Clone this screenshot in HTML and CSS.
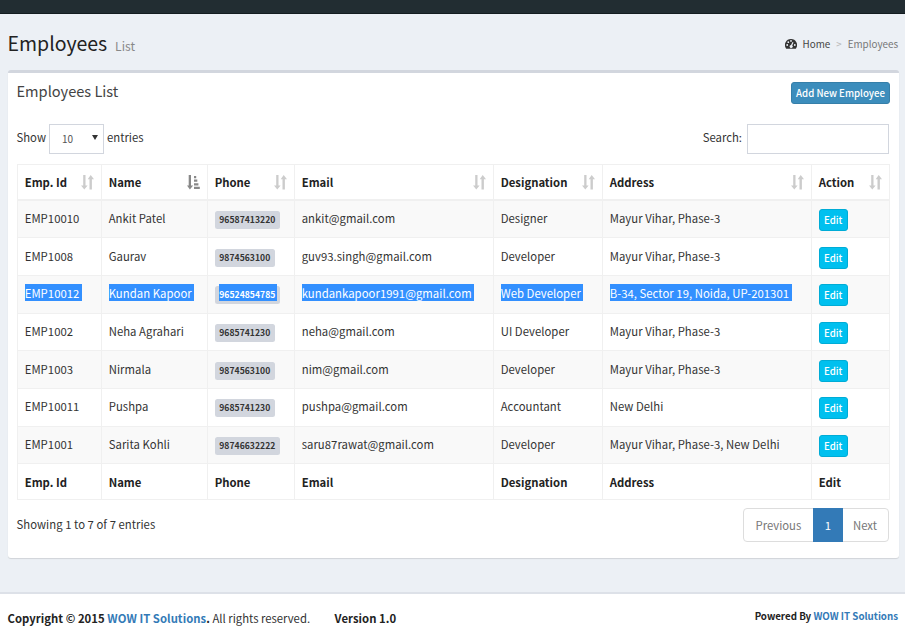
FILE: index.html
```
<!DOCTYPE html>
<html lang="en">
<head>
<meta charset="utf-8">
<title>Employees List</title>
<link rel="stylesheet" href="styles.css">
</head>
<body>
<svg class="defs" aria-hidden="true">
  <symbol id="sort" viewBox="0 0 13 15"><path d="M2.2 0h2.3v10.4h2.1L3.3 14.6 0 10.4h2.2zM8.5 14.6V4.2H6.7L9.7 0 13 4.2h-2.1v10.4z"/></symbol>
  <symbol id="sort-asc" viewBox="0 0 13 15"><path d="M1.7 0h2.3v10.4h2.1L2.9 14.6 0 10.4h1.7zM7 1h2.2v2.2H7zM7 4.6h3.3v2.2H7zM7 8.2h4.4v2.2H7zM7 11.8h5.8V14H7z"/></symbol>
</svg>
<div class="topbar"></div>
<header class="page-head">
  <h1>Employees <small>List</small></h1>
  <nav class="crumbs">
    <svg viewBox="0 0 12 10" class="dash"><path fill-rule="evenodd" d="M6 0a6 6 0 0 0-5 9.400Q1.200 9.800 1.700 9.800h8.600q.5 0 .7-.4A6 6 0 0 0 6 0zM2.200 5.100a.9.900 0 1 0 0 1.800.9.900 0 0 0 0-1.800zM3.300 2.300a.9.900 0 1 0 0 1.800.9.900 0 0 0 0-1.800zM6 1a.9.900 0 1 0 0 1.800.9.900 0 0 0 0-1.800zM9.800 5.100a.9.900 0 1 0 0 1.800.9.900 0 0 0 0-1.800zM7.500 3 6 6.100a1.500 1.500 0 1 0 1.200.4L8.500 3.400z"/></svg>
    <a class="home">Home</a><span class="sep">&gt;</span><span class="here">Employees</span>
  </nav>
</header>
<main class="box">
  <div class="box-head">
    <h3>Employees List</h3>
    <a class="btn primary">Add New Employee</a>
  </div>
  <div class="controls">
    <label class="length">Show<span class="select"><span>10</span><i class="caret"></i></span>entries</label>
    <label class="search">Search:<input type="text"></label>
  </div>
  <table>
    <thead>
      <tr><th>Emp. Id<svg><use href="#sort"/></svg></th><th>Name<svg class="on"><use href="#sort-asc"/></svg></th><th>Phone<svg><use href="#sort"/></svg></th><th>Email<svg><use href="#sort"/></svg></th><th>Designation<svg><use href="#sort"/></svg></th><th>Address<svg><use href="#sort"/></svg></th><th>Action<svg><use href="#sort"/></svg></th></tr>
    </thead>
    <tbody>
      <tr><td>EMP10010</td><td>Ankit Patel</td><td><span class="label">96587413220</span></td><td>ankit@gmail.com</td><td>Designer</td><td>Mayur Vihar, Phase-3</td><td><a class="btn info">Edit</a></td></tr>
      <tr><td>EMP1008</td><td>Gaurav</td><td><span class="label">9874563100</span></td><td>guv93.singh@gmail.com</td><td>Developer</td><td>Mayur Vihar, Phase-3</td><td><a class="btn info">Edit</a></td></tr>
      <tr class="selected"><td><mark>EMP10012</mark></td><td><mark>Kundan Kapoor</mark></td><td><span class="label"><mark>96524854785</mark></span></td><td><mark>kundankapoor1991@gmail.com</mark></td><td><mark>Web Developer</mark></td><td><mark>B-34, Sector 19, Noida, UP-201301</mark></td><td><a class="btn info">Edit</a></td></tr>
      <tr><td>EMP1002</td><td>Neha Agrahari</td><td><span class="label">9685741230</span></td><td>neha@gmail.com</td><td>UI Developer</td><td>Mayur Vihar, Phase-3</td><td><a class="btn info">Edit</a></td></tr>
      <tr><td>EMP1003</td><td>Nirmala</td><td><span class="label">9874563100</span></td><td>nim@gmail.com</td><td>Developer</td><td>Mayur Vihar, Phase-3</td><td><a class="btn info">Edit</a></td></tr>
      <tr><td>EMP10011</td><td>Pushpa</td><td><span class="label">9685741230</span></td><td>pushpa@gmail.com</td><td>Accountant</td><td>New Delhi</td><td><a class="btn info">Edit</a></td></tr>
      <tr><td>EMP1001</td><td>Sarita Kohli</td><td><span class="label">98746632222</span></td><td>saru87rawat@gmail.com</td><td>Developer</td><td>Mayur Vihar, Phase-3, New Delhi</td><td><a class="btn info">Edit</a></td></tr>
    </tbody>
    <tfoot>
      <tr><th>Emp. Id</th><th>Name</th><th>Phone</th><th>Email</th><th>Designation</th><th>Address</th><th>Edit</th></tr>
    </tfoot>
  </table>
  <div class="table-foot">
    <div class="info-text">Showing 1 to 7 of 7 entries</div>
    <div class="pager"><span class="prev">Previous</span><span class="active">1</span><span class="next">Next</span></div>
  </div>
</main>
<footer>
  <div><b class="copy">Copyright © 2015 <a>WOW IT Solutions</a>.</b> All rights reserved. <b class="version">Version 1.0</b></div>
  <b class="powered">Powered By <a>WOW IT Solutions</a></b>
</footer>
</body>
</html>
```
FILE: styles.css
```
* { box-sizing: border-box; }
body {
  margin: 0;
  height: 643px;
  overflow: hidden;
  background: #ecf0f5;
  color: #333;
  font: 11.32px/18px "Noto Sans CJK SC", "Open Sans", sans-serif;
}
.defs { display: none; }
.topbar { height: 14px; background: #222d32; border-bottom: 1px solid #131c20; }
.page-head { height: 56px; padding: 0 7px 0 7.500px; display: flex; justify-content: space-between; }
h1 { margin: 15px 0 0; font-size: 19.5px; line-height: 28px; font-weight: 400; color: #222; }
h1 small { font-size: 12.1px; color: #888; margin-left: 3.500px; }
.crumbs { display: flex; align-items: center; height: 18px; margin-top: 21px; font-size: 9.85px; color: #777; }
.dash { width: 12px; height: 10px; fill: #333; margin-right: 6px; }
.home { color: #444; }
.sep { color: #bbb; margin: 0 6px; font-size: 9.700px; }
.box {
  width: 891px;
  height: 488px;
  margin-left: 8px;
  padding: 0 10px 0 9px;
  background: #fff;
  border-top: 3px solid #d2d6de;
  border-radius: 3px;
  box-shadow: 0 1px 1px rgba(0,0,0,.12);
}
.box-head { display: flex; justify-content: space-between; height: 51px; }
h3 { margin: 8px 0 0 -0.500px; font-size: 14.6px; line-height: 20px; font-weight: 400; color: #444; }
.btn {
  display: inline-block;
  height: 22px;
  padding: 0 4px;
  border: 1px solid;
  border-radius: 3px;
  color: #fff;
  font-size: 9.67px;
  line-height: 19px;
  font-weight: 500;
  white-space: nowrap;
}
.primary { margin: 9px -1px 0 0; line-height: 20px; background: #3c8dbc; border-color: #367fa9; }
.info { background: #00c0ef; border-color: #00acd6; }
.controls { display: flex; justify-content: space-between; height: 40px; }
.controls label { display: flex; height: 30px; line-height: 27px; }
.length { margin-left: -0.500px; }
.select {
  display: flex;
  justify-content: space-between;
  align-items: center;
  width: 55px;
  height: 30px;
  margin: 0 3px;
  padding: 0 5px 0 12px;
  border: 1px solid #d2d6de;
  font-size: 10px;
  line-height: 18px;
  color: #555;
}
.select span { margin-top: -1px; }
.caret { margin-top: -3px; border: 3px solid transparent; border-top: 5px solid #333; border-bottom: 0; }
.search input { width: 142px; height: 30px; margin: 0 0 0 5px; border: 1px solid #d2d6de; background: #fff; }
table { display: block; width: 873px; border-left: 1px solid #f0f0f0; }
thead, tbody, tfoot { display: block; }
tr { display: grid; grid-template-columns: 84px 106px 87px 199px 109px 209px 78px; height: 37.700px; }
tbody tr:nth-child(odd) { background: #f9f9f9; }
th, td { padding: 8px 6.700px 0; border-right: 1px solid #f0f0f0; border-bottom: 1px solid #f0f0f0; text-align: left; white-space: nowrap; }
td { padding-top: 8.400px; letter-spacing: .04px; }
th { color: #222; font-weight: 700; }
thead tr { height: 36.500px; }
thead th { position: relative; border-top: 1px solid #f0f0f0; border-bottom-width: 2px; }
thead svg { position: absolute; right: 7.500px; top: 10px; width: 13px; height: 15px; fill: #ccc; }
thead svg.on { fill: #888; }
tfoot tr { height: 35.300px; }
tfoot th { padding-top: 9px; }
td .btn { margin: 0 0 0 .3px; width: 29px; line-height: 20px; letter-spacing: 0; }
.label {
  display: block;
  width: fit-content;
  height: 18px;
  margin-top: 2px;
  padding: 0 4.500px;
  border-radius: 2.500px;
  background: #d2d6de;
  color: #333;
  font-size: 8.600px;
  line-height: 17px;
  font-weight: 700;
}
mark { display: block; width: fit-content; height: 17px; line-height: 18px; padding-right: 2.500px; background: #3390ff; color: #fff; }
.label mark { position: relative; top: -2px; margin-right: -2px; padding-right: 2px; line-height: 20px; }
.table-foot { display: flex; justify-content: space-between; }
.info-text { padding-top: 15px; margin-left: -0.500px; letter-spacing: .03px; }
.pager { display: flex; height: 34px; margin: 8px 0 0; border: 1px solid #ddd; border-radius: 4px; line-height: 32px; color: #777; }
.prev { width: 69px; padding-left: 11.500px; }
.active { width: 30px; margin: -1px 0; line-height: 34px; text-align: center; background: #337ab7; color: #fff; }
.next { width: 45px; padding-left: 10px; }
footer {
  display: flex;
  justify-content: space-between;
  height: 51px;
  margin-top: 34px;
  padding: 14.500px 7px 0 7.500px;
  background: #fff;
  border-top: 2px solid #dde1e8;
}
footer a { color: #337ab7; }
footer b { color: #222; }
.copy { letter-spacing: .03px; }
.version { margin-left: 22px; letter-spacing: .05px; }
.powered { font-size: 9.740px; line-height: 14px; }
```
